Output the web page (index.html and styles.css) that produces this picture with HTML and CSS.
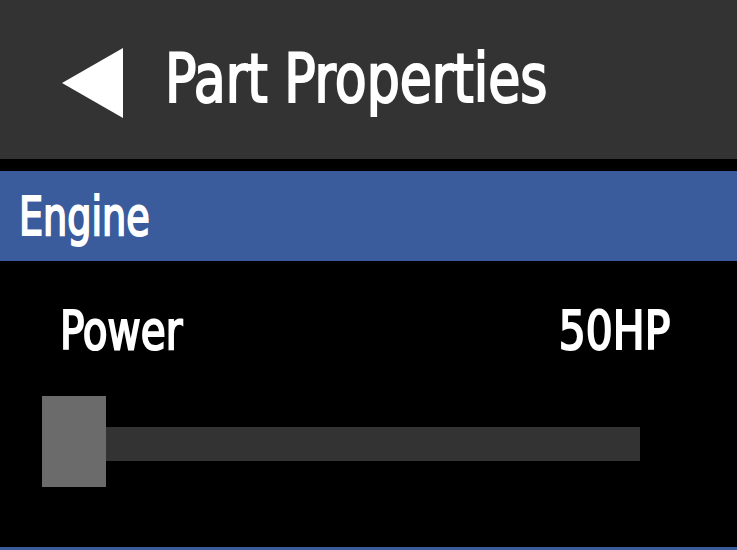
FILE: index.html
```html
<!DOCTYPE html>
<html>
<head>
<meta charset="utf-8">
<link rel="stylesheet" href="styles.css">
</head>
<body>
<header class="topbar">
  <svg class="back" width="61" height="70" viewBox="0 0 61 70"><polygon points="0,35 61,0 61,70" fill="#fff"/></svg>
  <h1 class="title"><span class="narrow narrow-title">Part Properties</span></h1>
</header>
<section class="group">
  <div class="group-head"><span class="narrow narrow-head">Engine</span></div>
  <div class="prop">
    <div class="prop-row">
      <span class="narrow prop-name">Power</span>
      <span class="narrow prop-value">50HP</span>
    </div>
    <div class="slider">
      <div class="track"></div>
      <div class="thumb"></div>
    </div>
  </div>
  <div class="group-foot"></div>
</section>
</body>
</html>
```
FILE: styles.css
```css
html, body {
  margin: 0;
  padding: 0;
  background: #000;
  width: 737px;
  height: 550px;
  overflow: hidden;
}
body {
  font-family: "DejaVu Sans Condensed", "DejaVu Sans", sans-serif;
  color: #fff;
}
.narrow {
  display: inline-block;
  white-space: nowrap;
  transform: scaleX(0.85);
  transform-origin: left center;
  -webkit-text-stroke: 2px #fff;
}
.topbar {
  height: 159px;
  background: #333333;
  display: flex;
  align-items: center;
  padding-left: 62px;
  box-sizing: border-box;
}
.back {
  display: block;
  margin-top: 6px;
}
.title {
  margin: 0 0 0 42px;
  font-size: 67px;
  font-weight: normal;
  line-height: 1;
}
.narrow-title {
  transform: scaleX(0.865);
}
.group {
  margin-top: 12px;
}
.group-head {
  height: 90px;
  background: #3a5b9c;
  display: flex;
  align-items: center;
  padding-left: 19px;
  font-size: 53px;
  line-height: 1;
}
.narrow-head {
  transform: scaleX(0.8);
}
.prop {
  padding: 0 67px 0 42px;
}
.prop-row {
  display: flex;
  justify-content: space-between;
  padding: 43px 0 0 18px;
  font-size: 53px;
  line-height: 1;
}
.prop-name {
  transform: scaleX(0.85);
}
.prop-value {
  transform: scaleX(0.89);
  transform-origin: right center;
}
.slider {
  position: relative;
  margin-top: 39px;
  width: 598px;
  height: 91px;
  padding-top: 31px;
  box-sizing: border-box;
}
.track {
  height: 34px;
  background: #333333;
}
.thumb {
  position: absolute;
  left: 0;
  top: 0;
  width: 64px;
  height: 91px;
  background: #6b6b6b;
}
.group-foot {
  margin-top: 60px;
  height: 4px;
  background: #3a5b9c;
}
```
